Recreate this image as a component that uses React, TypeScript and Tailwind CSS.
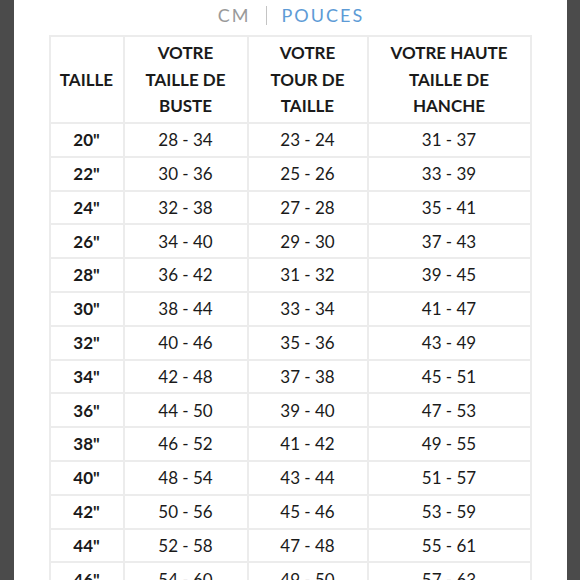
const rows: [string, string, string, string][] = [
  ['20"', "28 - 34", "23 - 24", "31 - 37"],
  ['22"', "30 - 36", "25 - 26", "33 - 39"],
  ['24"', "32 - 38", "27 - 28", "35 - 41"],
  ['26"', "34 - 40", "29 - 30", "37 - 43"],
  ['28"', "36 - 42", "31 - 32", "39 - 45"],
  ['30"', "38 - 44", "33 - 34", "41 - 47"],
  ['32"', "40 - 46", "35 - 36", "43 - 49"],
  ['34"', "42 - 48", "37 - 38", "45 - 51"],
  ['36"', "44 - 50", "39 - 40", "47 - 53"],
  ['38"', "46 - 52", "41 - 42", "49 - 55"],
  ['40"', "48 - 54", "43 - 44", "51 - 57"],
  ['42"', "50 - 56", "45 - 46", "53 - 59"],
  ['44"', "52 - 58", "47 - 48", "55 - 61"],
  ['46"', "54 - 60", "49 - 50", "57 - 63"],
];

const headerLines = [["TAILLE"], ["VOTRE", "TAILLE DE", "BUSTE"], ["VOTRE", "TOUR DE", "TAILLE"], ["VOTRE HAUTE", "TAILLE DE", "HANCHE"]];

export default function App() {
  return (
    <div className="h-[580px] w-[580px] overflow-hidden bg-[#4b4b4b] flex justify-center font-['Lato',sans-serif]">
      <div className="w-[553px] bg-white flex flex-col items-center">
        {/* unit switch */}
        <div className="h-[35px] shrink-0 flex items-center gap-[15px] text-[18px] tracking-[2px] pb-[4px] pl-[2px]">
          <span className="text-[#9a9a9a]">CM</span>
          <span className="w-px h-[19px] bg-[#c4c4c4]" />
          <span className="text-[#5d9bd6]">POUCES</span>
        </div>

        {/* size table */}
        <div className="shrink-0 grid grid-cols-[74px_124px_120px_163px] border-l-2 border-t-2 border-[#ececec] text-[#1a1a1a] text-[17px]">
          {headerLines.map((lines, i) => (
            <div
              key={i}
              className="h-[87px] pt-[1px] border-r-2 border-b-2 border-[#ececec] flex flex-col items-center justify-center font-bold leading-[26.5px] text-center"
            >
              {lines.map((l) => (
                <span key={l}>{l}</span>
              ))}
            </div>
          ))}
          {rows.map((r) =>
            r.map((c, j) => (
              <div
                key={r[0] + j}
                className={
                  "h-[33.8px] border-r-2 border-b-2 border-[#ececec] flex items-center justify-center " +
                  (j === 0 ? "font-bold" : "")
                }
              >
                {c}
              </div>
            ))
          )}
        </div>
      </div>
    </div>
  );
}
